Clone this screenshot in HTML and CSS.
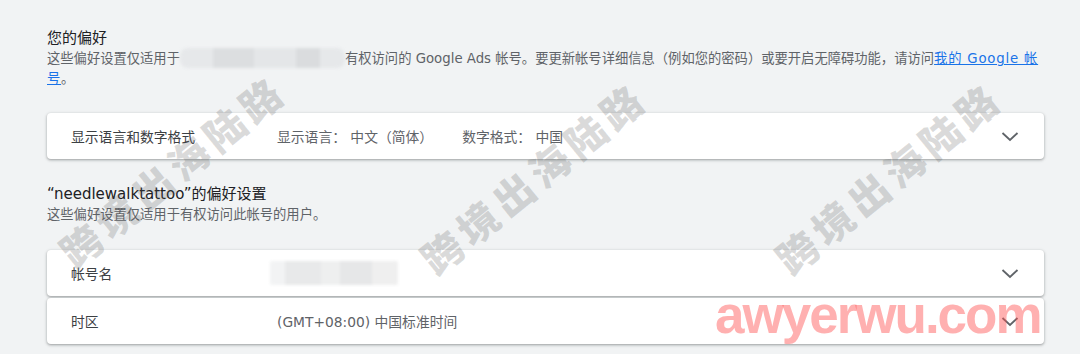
FILE: index.html
```html
<!DOCTYPE html>
<html lang="zh-CN">
<head>
    <meta charset="UTF-8">
    <title>偏好设置</title>
    <link rel="stylesheet" href="styles.css">
</head>
<body>
    <div class="page">
        <!-- 您的偏好 -->
        <div class="section-head">
            <h2 class="section-title">您的偏好</h2>
            <p class="section-desc">这些偏好设置仅适用于<span class="blur blur-email"></span>有权访问的 Google Ads 帐号。要更新帐号详细信息（例如您的密码）或要开启无障碍功能，请访问<a href="#" class="link">我的 Google 帐号</a>。</p>
        </div>

        <div class="card first">
            <div class="row">
                <div class="row-label">显示语言和数字格式</div>
                <div class="row-value">
                    <span>显示语言： 中文（简体）</span>
                    <span>数字格式： 中国</span>
                </div>
                <svg class="chevron" width="24" height="24" viewBox="0 0 24 24"><path d="M4.5 9 L12 16 L19.5 9" fill="none" stroke="#5f6368" stroke-width="1.8"/></svg>
            </div>
        </div>

        <!-- 帐号偏好 -->
        <div class="section-head second">
            <h2 class="section-title">“needlewalktattoo”的偏好设置</h2>
            <p class="section-desc">这些偏好设置仅适用于有权访问此帐号的用户。</p>
        </div>

        <div class="card-list">
            <div class="card">
                <div class="row">
                    <div class="row-label">帐号名</div>
                    <div class="row-value"><span class="blur blur-name"></span></div>
                    <svg class="chevron" width="24" height="24" viewBox="0 0 24 24"><path d="M4.5 9 L12 16 L19.5 9" fill="none" stroke="#5f6368" stroke-width="1.8"/></svg>
                </div>
            </div>
            <div class="card">
                <div class="row">
                    <div class="row-label">时区</div>
                    <div class="row-value">(GMT+08:00) 中国标准时间</div>
                    <svg class="chevron" width="24" height="24" viewBox="0 0 24 24"><path d="M4.5 9 L12 16 L19.5 9" fill="none" stroke="#5f6368" stroke-width="1.8"/></svg>
                </div>
            </div>
        </div>
    </div>

    <!-- 水印 -->
    <div class="wm wm-1">跨境出海陆路</div>
    <div class="wm wm-2">跨境出海陆路</div>
    <div class="wm wm-3">跨境出海陆路</div>
    <div class="wm-site">awyerwu.com</div>
</body>
</html>
```

FILE: styles.css
```css
body {
    margin: 0;
    padding: 0;
    background: #f1f3f4;
    font-family: "DejaVu Sans", "Noto Sans CJK SC", sans-serif;
    color: #3c4043;
    height: 354px;
    overflow: hidden;
}

.page {
    width: 997px;
    padding: 27px 0 0 47px;
}

/* 标题区 */
.section-title {
    margin: 0;
    font-size: 15px;
    font-weight: 400;
    line-height: 22px;
    color: #202124;
}
.section-desc {
    margin: 0;
    font-size: 13.3px;
    line-height: 20px;
    color: #5f6368;
}
.section-head.second {
    margin-top: 24px;
}
.link {
    color: #1a73e8;
    letter-spacing: 0.8px;
}

/* 打码块 */
.blur {
    display: inline-block;
    vertical-align: middle;
    border-radius: 8px;
    filter: blur(1.5px);
}
.blur-email {
    width: 165px;
    height: 20px;
    margin-top: -2px;
    background:
        linear-gradient(90deg, #e6e8ea 0 20%, #dcdee0 20% 45%, #e4e6e8 45% 70%, #dadcde 70% 85%, #e6e8ea 85%);
}
.blur-name {
    width: 128px;
    height: 24px;
    margin-left: -7px;
    border-radius: 2px;
    background:
        linear-gradient(90deg, #f2f3f4 0 12%, #e8e9ea 12% 40%, #eeefef 40% 55%, #e6e7e8 55% 80%, #efefef 80%);
}

/* 卡片 */
.card {
    background: #fff;
    border-radius: 4px;
    box-shadow: 0 1px 2px rgba(60,64,67,0.3), 0 1px 3px 1px rgba(60,64,67,0.15);
}
.card.first {
    margin-top: 24px;
}
.card-list {
    margin-top: 25px;
    display: flex;
    flex-direction: column;
    gap: 2px;
}
.row {
    display: flex;
    align-items: center;
    height: 46px;
    padding: 0 22px 0 24px;
    font-size: 13.8px;
}
.row-label {
    width: 206px;
    color: #3c4043;
}
.row-value {
    flex: 1;
    display: flex;
    align-items: center;
    gap: 29px;
    color: #5f6368;
}
.chevron {
    flex: none;
}

/* 水印 */
.wm {
    position: absolute;
    font-family: "Noto Sans CJK SC", sans-serif;
    font-weight: 900;
    font-size: 40px;
    line-height: 1;
    letter-spacing: 6px;
    color: rgba(90,90,90,0.22);
    transform: translate(-50%, -50%) rotate(-39deg);
    white-space: nowrap;
    pointer-events: none;
}
.wm-1 { left: 172px; top: 170px; }
.wm-2 { left: 533px; top: 177px; }
.wm-3 { left: 888px; top: 177px; }
.wm-site {
    position: absolute;
    left: 715px;
    top: 288px;
    font-family: "Liberation Sans", sans-serif;
    font-weight: 700;
    font-size: 53px;
    line-height: 1;
    letter-spacing: -2px;
    color: rgba(255,80,80,0.45);
    pointer-events: none;
}
```
